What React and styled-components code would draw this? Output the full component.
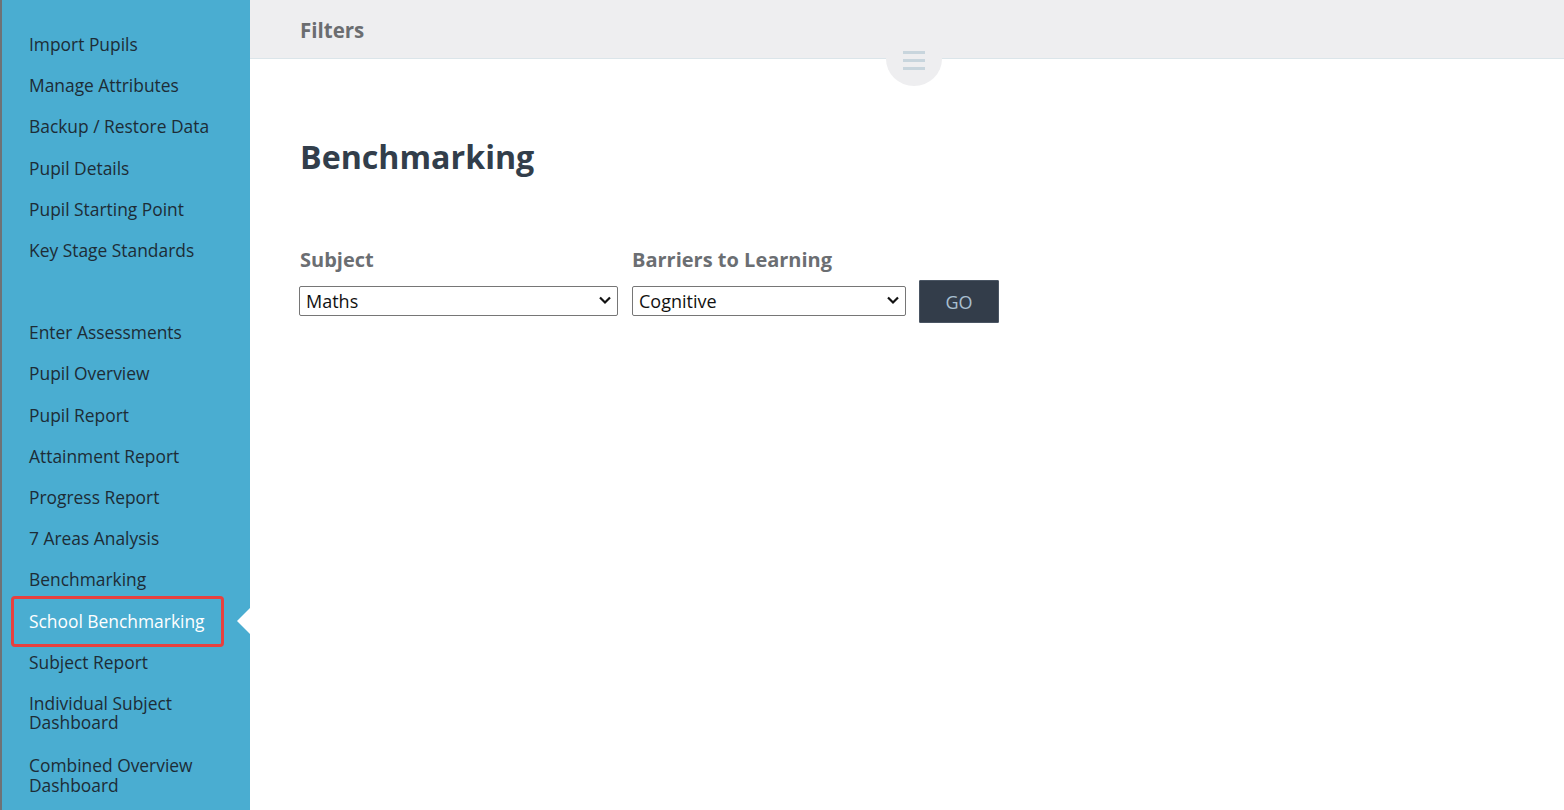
import React from "react";
import styled, { createGlobalStyle, css } from "styled-components";

const Global = createGlobalStyle`
  html, body { margin: 0; padding: 0; background: #ffffff; }
  body { font-family: "Open Sans", "Liberation Sans", sans-serif; }
  * { box-sizing: border-box; }
`;

const Page = styled.div`
  display: grid;
  grid-template-columns: 250px 1fr;
  min-height: 100vh;
`;

const Sidebar = styled.nav`
  background: #4aadd1;
  border-left: 2px solid #6e7276;
  padding: 24px 0 0 0;
  display: flex;
  flex-direction: column;
  height: 810px;
  overflow: hidden;
`;

const Spacer = styled.div`
  height: 41px;
  flex: none;
`;

const Item = styled.a`
  position: relative;
  display: block;
  padding: 11px 20px 11px 27px;
  margin-bottom: ${(p) => (p.$multi ? "2px" : "0")};
  font-size: 17.4px;
  line-height: 19.2px;
  color: #1d2c36;
  text-decoration: none;
  flex: none;
  ${(p) =>
    p.$active &&
    css`
      color: #ffffff;
      &::before {
        content: "";
        position: absolute;
        top: -5px;
        bottom: -5px;
        left: 9px;
        right: 26px;
        border: 3px solid #e7403f;
        border-radius: 4px;
      }
      &::after {
        content: "";
        position: absolute;
        right: 0;
        top: 50%;
        margin-top: -13px;
        border-top: 13px solid transparent;
        border-bottom: 13px solid transparent;
        border-right: 13px solid #ffffff;
      }
    `}
`;

const Main = styled.main`
  display: flex;
  flex-direction: column;
  min-width: 0;
`;

const Header = styled.header`
  position: relative;
  height: 59px;
  background: #eeeef0;
  border-bottom: 1px solid #dbe5ea;
  padding: 0 50px;
  display: flex;
  align-items: center;
`;

const HeaderTitle = styled.h2`
  margin: 0;
  font-size: 20.5px;
  font-weight: 700;
  color: #6b6d70;
  letter-spacing: 0;
  padding-top: 1px;
`;

const Toggle = styled.button`
  position: absolute;
  left: 636px;
  top: 32px;
  width: 56px;
  height: 54px;
  border: none;
  border-radius: 50%;
  background: #eeeef0;
  padding: 0;
  cursor: pointer;
  display: flex;
  align-items: flex-start;
  justify-content: center;
  padding-top: 18px;
`;

const Content = styled.section`
  padding: 76px 50px 0 50px;
`;

const Title = styled.h1`
  margin: 0;
  font-size: 32.2px;
  line-height: 44px;
  font-weight: 700;
  color: #323e4b;
`;

const FilterRow = styled.form`
  display: flex;
  align-items: flex-end;
  gap: 14px;
  margin: 69px 0 0 -1px;
`;

const Field = styled.div`
  display: flex;
  flex-direction: column;
  gap: 14px;
`;

const Label = styled.label`
  font-size: 20px;
  line-height: 24px;
  font-weight: 700;
  color: #6b6e72;
  padding-left: ${(p) => (p.$nudge ? "1px" : "0")};
`;

const SelectWrap = styled.div`
  position: relative;
  width: ${(p) => p.$w}px;
  margin-bottom: 7px;
`;

const Select = styled.select`
  appearance: none;
  width: 100%;
  height: 30px;
  border: 1px solid #767676;
  border-radius: 2px;
  background: #ffffff;
  font-family: "Open Sans", sans-serif;
  font-size: 18px;
  color: #111;
  padding: 0 30px 0 6px;
  outline: none;
`;

const Chevron = styled.svg`
  position: absolute;
  right: 6px;
  top: 9px;
  pointer-events: none;
`;

const Go = styled.button`
  width: 80px;
  height: 43px;
  margin-left: -1px;
  background: #333d4a;
  border: 1px solid #4a5563;
  border-radius: 1px;
  color: #a8bfd0;
  font-family: "Open Sans", sans-serif;
  font-size: 18px;
  cursor: pointer;
`;

const groupA = [
  "Import Pupils",
  "Manage Attributes",
  "Backup / Restore Data",
  "Pupil Details",
  "Pupil Starting Point",
  "Key Stage Standards",
];

const groupB = [
  "Enter Assessments",
  "Pupil Overview",
  "Pupil Report",
  "Attainment Report",
  "Progress Report",
  "7 Areas Analysis",
  "Benchmarking",
  "School Benchmarking",
  "Subject Report",
  ["Individual Subject", "Dashboard"],
  ["Combined Overview", "Dashboard"],
];

const renderLabel = (l) =>
  Array.isArray(l) ? (
    <>
      {l[0]}
      <br />
      {l[1]}
    </>
  ) : (
    l
  );

const ChevronIcon = () => (
  <Chevron width="14" height="10" viewBox="0 0 14 10">
    <path d="M2 2.5 L7 7.5 L12 2.5" fill="none" stroke="#111" strokeWidth="2.2" />
  </Chevron>
);

export default function App() {
  return (
    <>
      <Global />
      <Page>
        <Sidebar>
          {groupA.map((l) => (
            <Item key={l} href="#">
              {l}
            </Item>
          ))}
          <Spacer />
          {groupB.map((l) => (
            <Item
              key={Array.isArray(l) ? l.join(" ") : l}
              href="#"
              $multi={Array.isArray(l)}
              $active={l === "School Benchmarking"}
            >
              {renderLabel(l)}
            </Item>
          ))}
        </Sidebar>
        <Main>
          <Header>
            <HeaderTitle>Filters</HeaderTitle>
            <Toggle aria-label="Toggle filters">
              <svg width="24" height="20" viewBox="0 0 24 20">
                <rect x="1" y="1" width="22" height="3" fill="#c8d5dd" />
                <rect x="1" y="9" width="22" height="3" fill="#c8d5dd" />
                <rect x="1" y="17" width="22" height="3" fill="#c8d5dd" />
              </svg>
            </Toggle>
          </Header>
          <Content>
            <Title>Benchmarking</Title>
            <FilterRow onSubmit={(e) => e.preventDefault()}>
              <Field>
                <Label $nudge>Subject</Label>
                <SelectWrap $w={319}>
                  <Select defaultValue="Maths">
                    <option>Maths</option>
                    <option>Reading</option>
                    <option>Writing</option>
                  </Select>
                  <ChevronIcon />
                </SelectWrap>
              </Field>
              <Field>
                <Label>Barriers to Learning</Label>
                <SelectWrap $w={274}>
                  <Select defaultValue="Cognitive">
                    <option>Cognitive</option>
                    <option>Physical</option>
                    <option>Sensory</option>
                  </Select>
                  <ChevronIcon />
                </SelectWrap>
              </Field>
              <Go type="submit">GO</Go>
            </FilterRow>
          </Content>
        </Main>
      </Page>
    </>
  );
}
